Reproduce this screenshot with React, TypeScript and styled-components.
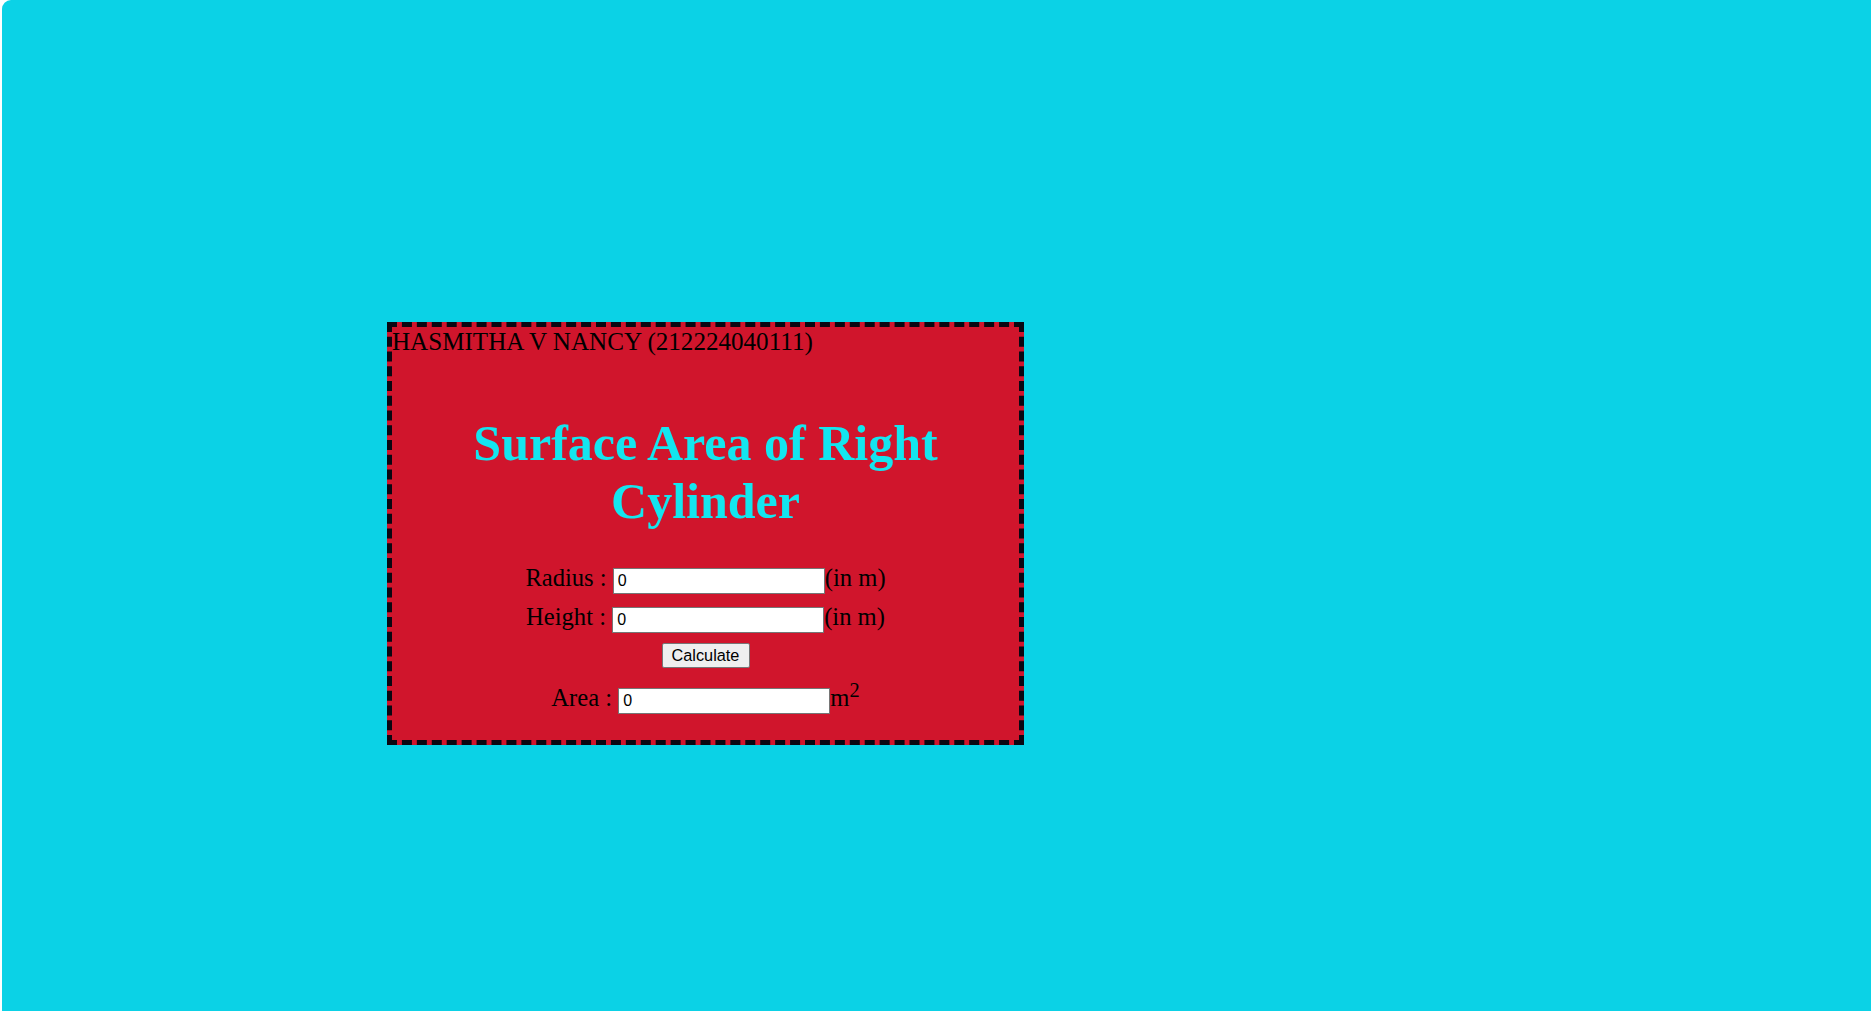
import React from "react";
import styled, { createGlobalStyle } from "styled-components";

const Global = createGlobalStyle`
  html, body {
    margin: 0;
    padding: 0;
    background: #ffffff;
  }
  body {
    font-family: "Liberation Serif", "Times New Roman", serif;
  }
`;

const Page = styled.div`
  margin-left: 2px;
  height: 1011px;
  box-sizing: border-box;
  background: #0bd2e6;
  border-top-left-radius: 9px;
  padding: 322px 0 0 385px;
  overflow: hidden;
`;

const Card = styled.div`
  width: 627px;
  border: 5px dashed #0a0712;
  background: #d0152c;
  color: #000;
  font-family: "Liberation Serif", "Times New Roman", serif;
  font-size: 24.6px;
  padding-bottom: 26px;
`;

const Author = styled.div`
  font-size: 25.1px;
  line-height: 28px;
  height: 28px;
  white-space: nowrap;
  padding-top: 1px;
`;

const Title = styled.h1`
  margin: 58px 0 33px;
  text-align: center;
  color: #13e6ef;
  font-size: 50px;
  line-height: 58.3px;
  font-weight: bold;
`;

const Row = styled.div<{ $gap?: number }>`
  text-align: center;
  margin-top: ${(p) => p.$gap ?? 0}px;
  white-space: nowrap;
`;

const NumberInput = styled.input`
  box-sizing: border-box;
  width: 212px;
  height: 26px;
  margin: 0;
  padding: 0 4px;
  border: 1px solid #767676;
  border-radius: 0;
  background: #fff;
  font-family: "Liberation Sans", Arial, sans-serif;
  font-size: 16px;
  color: #000;
  vertical-align: baseline;
`;

const Button = styled.button`
  box-sizing: border-box;
  width: 88px;
  height: 25px;
  padding: 0;
  margin: 0;
  border: 1px solid #767676;
  border-radius: 2px;
  background: #efefef;
  font-family: "Liberation Sans", Arial, sans-serif;
  font-size: 16.3px;
  color: #000;
  display: inline-block;
  vertical-align: top;
`;

const ButtonRow = styled.div`
  text-align: center;
  margin-top: 10px;
  height: 25px;
  line-height: 25px;
`;

const Sup = styled.sup`
  font-size: 0.83em;
  vertical-align: super;
  line-height: 0;
`;

export default function App() {
  return (
    <>
      <Global />
      <Page>
        <Card>
          <Author>HASMITHA V NANCY (212224040111)</Author>
          <Title>
            Surface Area of Right
            <br />
            Cylinder
          </Title>
          <Row>
            Radius : <NumberInput type="text" defaultValue="0" />(in m)
          </Row>
          <Row $gap={9}>
            Height : <NumberInput type="text" defaultValue="0" />(in m)
          </Row>
          <ButtonRow>
            <Button type="button">Calculate</Button>
          </ButtonRow>
          <Row $gap={16}>
            Area : <NumberInput type="text" defaultValue="0" readOnly />m
            <Sup>2</Sup>
          </Row>
        </Card>
      </Page>
    </>
  );
}
